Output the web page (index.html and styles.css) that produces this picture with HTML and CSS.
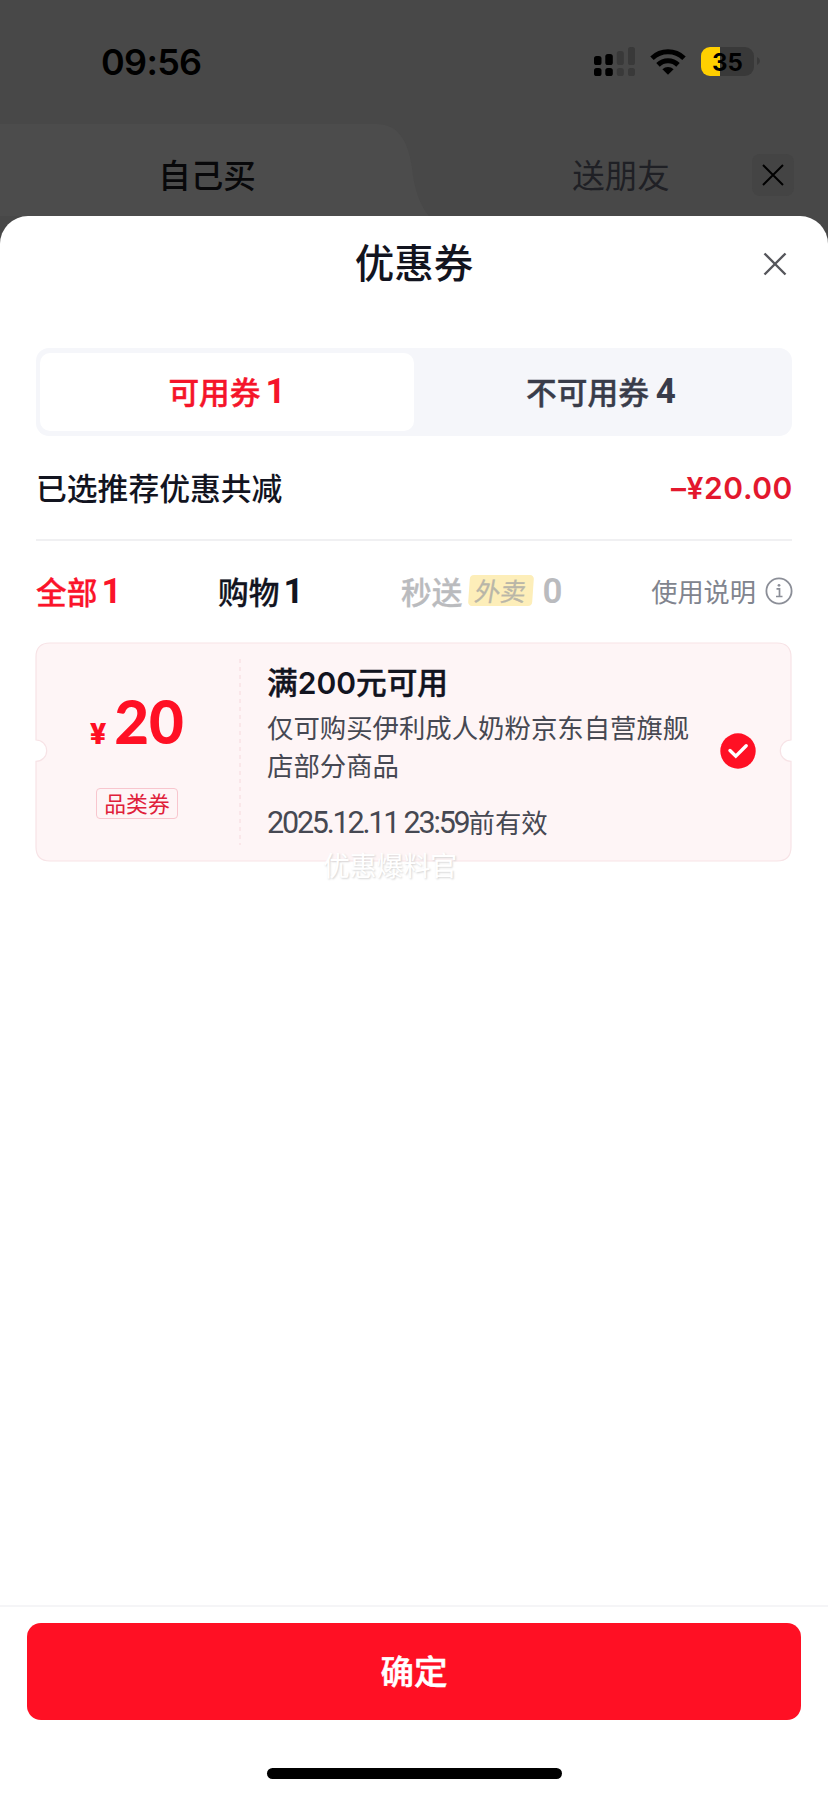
FILE: index.html
```html
<!DOCTYPE html>
<html lang="zh-CN">
<head>
<meta charset="utf-8">
<title>优惠券</title>
<link rel="stylesheet" href="styles.css">
</head>
<body>
<div class="screen">
  <header class="status">
    <span class="time">09:56</span>
    <div class="status-icons">
      <svg width="42" height="30" viewBox="0 0 42 30">
        <g fill="#000"><rect x="0" y="9" width="7.5" height="9" rx="2.6"/><rect x="11.3" y="7" width="7.5" height="11" rx="2.6"/><rect x="0" y="21" width="7.5" height="8" rx="2.6"/><rect x="11.3" y="21" width="7.5" height="8" rx="2.6"/></g>
        <g fill="#393939"><rect x="22.8" y="4" width="7" height="14" rx="2.6"/><rect x="34" y="0" width="7" height="18" rx="2.6"/><rect x="22.8" y="21" width="7" height="8" rx="2.6"/><rect x="34" y="21" width="7" height="8" rx="2.6"/></g>
      </svg>
      <svg class="wifi" width="36" height="27" viewBox="0 0 36 27">
        <g fill="none" stroke="#000" stroke-width="5"><path d="M2 10.2a23 23 0 0 1 32 0"/><path d="M8 16.9a14.4 14.4 0 0 1 20 0"/></g>
        <path d="M12.4 21.2a8.2 8.2 0 0 1 11.2 0L18 26.8z"/>
      </svg>
      <div class="battery"><span>35</span></div>
      <svg class="tip" width="3" height="8" viewBox="0 0 3 8"><path d="M0 0q3 1.5 3 4t-3 4z" fill="#393939"/></svg>
    </div>
  </header>
  <nav class="modes">
    <svg class="mode-shape" width="430" height="92" viewBox="0 0 430 92"><path d="M0 0H376C397 0 408 15 412 44C414 64 420 82 429 92H0Z" fill="#4c4c4c"/></svg>
    <span class="mode mode-on">自己买</span>
    <span class="mode mode-off">送朋友</span>
    <span class="mode-close"><svg width="22" height="22" viewBox="0 0 22 22"><path d="M1 1L21 21M21 1L1 21" stroke="#000" stroke-width="2"/></svg></span>
  </nav>

  <main class="sheet">
    <div class="title-row">
      <h1>优惠券</h1>
      <svg class="close" width="24" height="24" viewBox="0 0 24 24"><path d="M1.5 1.5L22.5 22.5M22.5 1.5L1.5 22.5" stroke="#55565b" stroke-width="2.4"/></svg>
    </div>
    <div class="segment">
      <div class="seg seg-on">可用券<b>1</b></div>
      <div class="seg">不可用券<b>4</b></div>
    </div>
    <div class="summary"><span>已选推荐优惠共减</span><strong>–¥20.00</strong></div>
    <div class="filters">
      <span class="filter on">全部<b>1</b></span>
      <span class="filter shop">购物<b>1</b></span>
      <span class="filter off">秒送<i class="takeout"><em>外卖</em></i><b>0</b></span>
      <span class="help">使用说明<svg width="28" height="28" viewBox="0 0 28 28" fill="none" stroke="#8b8e97"><circle cx="14" cy="14" r="12.6" stroke-width="1.8"/><path d="M11.5 11.8h3V19.5M11 19.5h6.5" stroke-width="1.7"/><circle cx="14" cy="8.3" r="1.4" fill="#8b8e97" stroke="none"/></svg></span>
    </div>
    <section class="coupon">
      <svg class="coupon-shape" width="757" height="220" viewBox="0 0 757 220"><path d="M15 1H742Q756 1 756 15V98A10.7 10.7 0 0 0 756 119.4V205Q756 219 742 219H15Q1 219 1 205V119.4A10.7 10.7 0 0 0 1 98V15Q1 1 15 1Z" fill="#fef5f6" stroke="#f7e3e6" stroke-width="1.2"/></svg>
      <div class="value">
        <div class="amount"><small>¥</small>20</div>
        <span class="kind">品类券</span>
      </div>
      <svg class="perf" width="2" height="186" viewBox="0 0 2 186"><path d="M1 0V186" stroke="#f9e4e7" stroke-width="1.6" stroke-dasharray="4 4"/></svg>
      <div class="info">
        <h2>满<b>200</b>元可用</h2>
        <p class="desc">仅可购买伊利成人奶粉京东自营旗舰店部分商品</p>
        <p class="date"><span>2025.12.11 23:59</span>前有效</p>
      </div>
      <svg class="check" width="36" height="36" viewBox="0 0 36 36"><circle cx="18" cy="18" r="17.7" fill="#ff1024"/><path d="M10 17.5L15.8 23.2L26.2 12.8" fill="none" stroke="#fff" stroke-width="3.4" stroke-linecap="round"/></svg>
      <span class="watermark">优惠爆料官</span>
    </section>
  </main>

  <footer class="footer">
    <button class="confirm">确定</button>
    <div class="home"></div>
  </footer>
</div>
</body>
</html>
```

FILE: styles.css
```css
* { box-sizing: border-box; margin: 0; padding: 0; }
body { font-family: "Noto Sans CJK SC", sans-serif; color: #12141f; }
svg { display: block; flex: none; }
.screen { width: 828px; height: 1796px; display: flex; flex-direction: column; overflow: hidden; background: linear-gradient(#484848 300px, #fff 300px); }

.status { height: 124px; padding: 0 68px 0 101px; display: flex; justify-content: space-between; align-items: flex-start; }
.time { margin-top: 40px; font: 600 36px/44px Inter, sans-serif; color: #000; letter-spacing: -0.7px; }
.status-icons { display: flex; margin-top: 47px; }
.wifi { margin: 1px 0 0 14px; }
.battery { width: 53px; height: 29px; margin-left: 15px; border-radius: 9px; background: linear-gradient(90deg, #ffcf00 19px, #393939 19px); text-align: center; font: 700 24px/31px Inter, sans-serif; color: #000; }
.tip { margin: 10px 0 0 3px; }

.modes { position: relative; height: 92px; display: grid; grid-template-columns: 414px 414px; }
.mode-shape { position: absolute; left: 0; top: 0; }
.mode { position: relative; font-size: 32.5px; line-height: 48px; text-align: center; margin-top: 26px; }
.mode-on { font-weight: 500; color: #08080a; }
.mode-off { color: #1f2025; }
.mode-close { position: absolute; left: 752px; top: 30px; width: 42px; height: 42px; border-radius: 8px; background: #444; display: grid; place-items: center; }

.sheet { flex: 1; background: #fff; border-radius: 28px 28px 0 0; padding: 0 36px; }
.title-row { height: 96px; padding-bottom: 7px; display: flex; align-items: center; justify-content: center; position: relative; }
h1 { font-size: 39.5px; font-weight: 500; line-height: 58px; }
.close { position: absolute; right: 5px; top: 36px; }

.segment { margin-top: 36px; height: 88px; padding: 5px 4px; border-radius: 13px; background: #f5f6fa; display: grid; grid-template-columns: 374px 1fr; }
.seg { display: flex; justify-content: center; align-items: center; padding-bottom: 4px; font-size: 30.7px; font-weight: 500; color: #393c4a; -webkit-text-stroke: 0.4px; }
.seg-on { background: #fff; border-radius: 10px; color: #f5142a; }
.seg b, .filter b { font-family: Roboto, sans-serif; font-size: 35px; font-weight: 700; margin: 3px 0 0 7px; -webkit-text-stroke: 0; }
.seg-on b { margin-left: 5px; }

.summary { height: 105px; padding-bottom: 2px; display: flex; justify-content: space-between; align-items: center; border-bottom: 2px solid #f0f0f2; font-size: 30.8px; font-weight: 500; }
.summary strong { font: 600 30px/40px Inter, sans-serif; letter-spacing: 0.6px; color: #e3182d; margin: 3px -1px 0 0; }

.filters { height: 101px; padding-bottom: 2px; display: grid; grid-template-columns: 182px 183px 1fr auto; align-items: center; }
.filter { display: flex; align-items: center; font-size: 30.7px; font-weight: 500; line-height: 44px; -webkit-text-stroke: 0.3px; }
.filter b { margin-left: 4px; }
.filter.off b { margin-left: 9px; font-weight: 600; }
.on { color: #fb142a; }
.off { color: #babbbe; }
.takeout { display: block; width: 64px; height: 31px; margin-left: 7px; border-radius: 4px; background: #fdeeb9; transform: skewX(-4deg); text-align: center; font-style: normal; }
.takeout em { display: block; font-size: 25.5px; font-weight: 400; line-height: 30px; color: #b9b6a8; font-style: normal; transform: skewX(-6deg); }
.help { display: flex; align-items: center; gap: 9px; margin-right: -1px; color: #81848e; font-size: 26.2px; }

.coupon { position: relative; height: 220px; display: flex; margin-left: -1px; width: 757px; }
.coupon-shape { position: absolute; left: 0; top: 0; }
.value { position: relative; width: 204px; padding-top: 44px; display: flex; flex-direction: column; align-items: center; }
.amount { font: 900 60px/70px Lato, sans-serif; color: #ff1024; }
.amount small { font: 900 30px/30px Roboto, sans-serif; margin-right: 8px; }
.kind { margin-top: 32px; width: 82px; height: 31px; border: 1.5px solid #f8c6ce; border-radius: 4px; color: #e0203a; font-size: 21.8px; line-height: 27px; text-align: center; }
.perf { position: relative; margin-top: 17px; }
.info { position: relative; margin-left: 26px; width: 425px; padding-top: 17px; }
h2 { font-size: 30.7px; font-weight: 500; line-height: 44px; -webkit-text-stroke: 0.4px; }
h2 b { font-family: Inter, sans-serif; font-weight: 600; font-size: 30px; -webkit-text-stroke: 0; }
.desc { font-size: 26.4px; line-height: 38px; margin-top: 3px; color: #464852; }
.date { font-size: 26.4px; line-height: 38px; margin-top: 19px; color: #464852; white-space: nowrap; }
.date span { font-family: Roboto, sans-serif; font-size: 30.5px; letter-spacing: -2.2px; }
.check { position: relative; margin: 91px 0 0 28px; }
.watermark { position: absolute; left: 288px; top: 203px; font-size: 26.8px; line-height: 40px; color: #fff; text-shadow: 1px 1px 2px #d4d4d4; }

.footer { height: 191px; background: #fff; border-top: 2px solid #f5f5f7; padding: 16px 27px 0; }
.confirm { display: block; width: 774px; height: 97px; padding-bottom: 3px; border: 0; border-radius: 14px; background: #ff1024; color: #fff; font: 500 33.5px/94px "Noto Sans CJK SC", sans-serif; -webkit-text-stroke: 0.5px; }
.home { width: 295px; height: 11px; border-radius: 6px; background: #000; margin: 48px auto 0; }
```
